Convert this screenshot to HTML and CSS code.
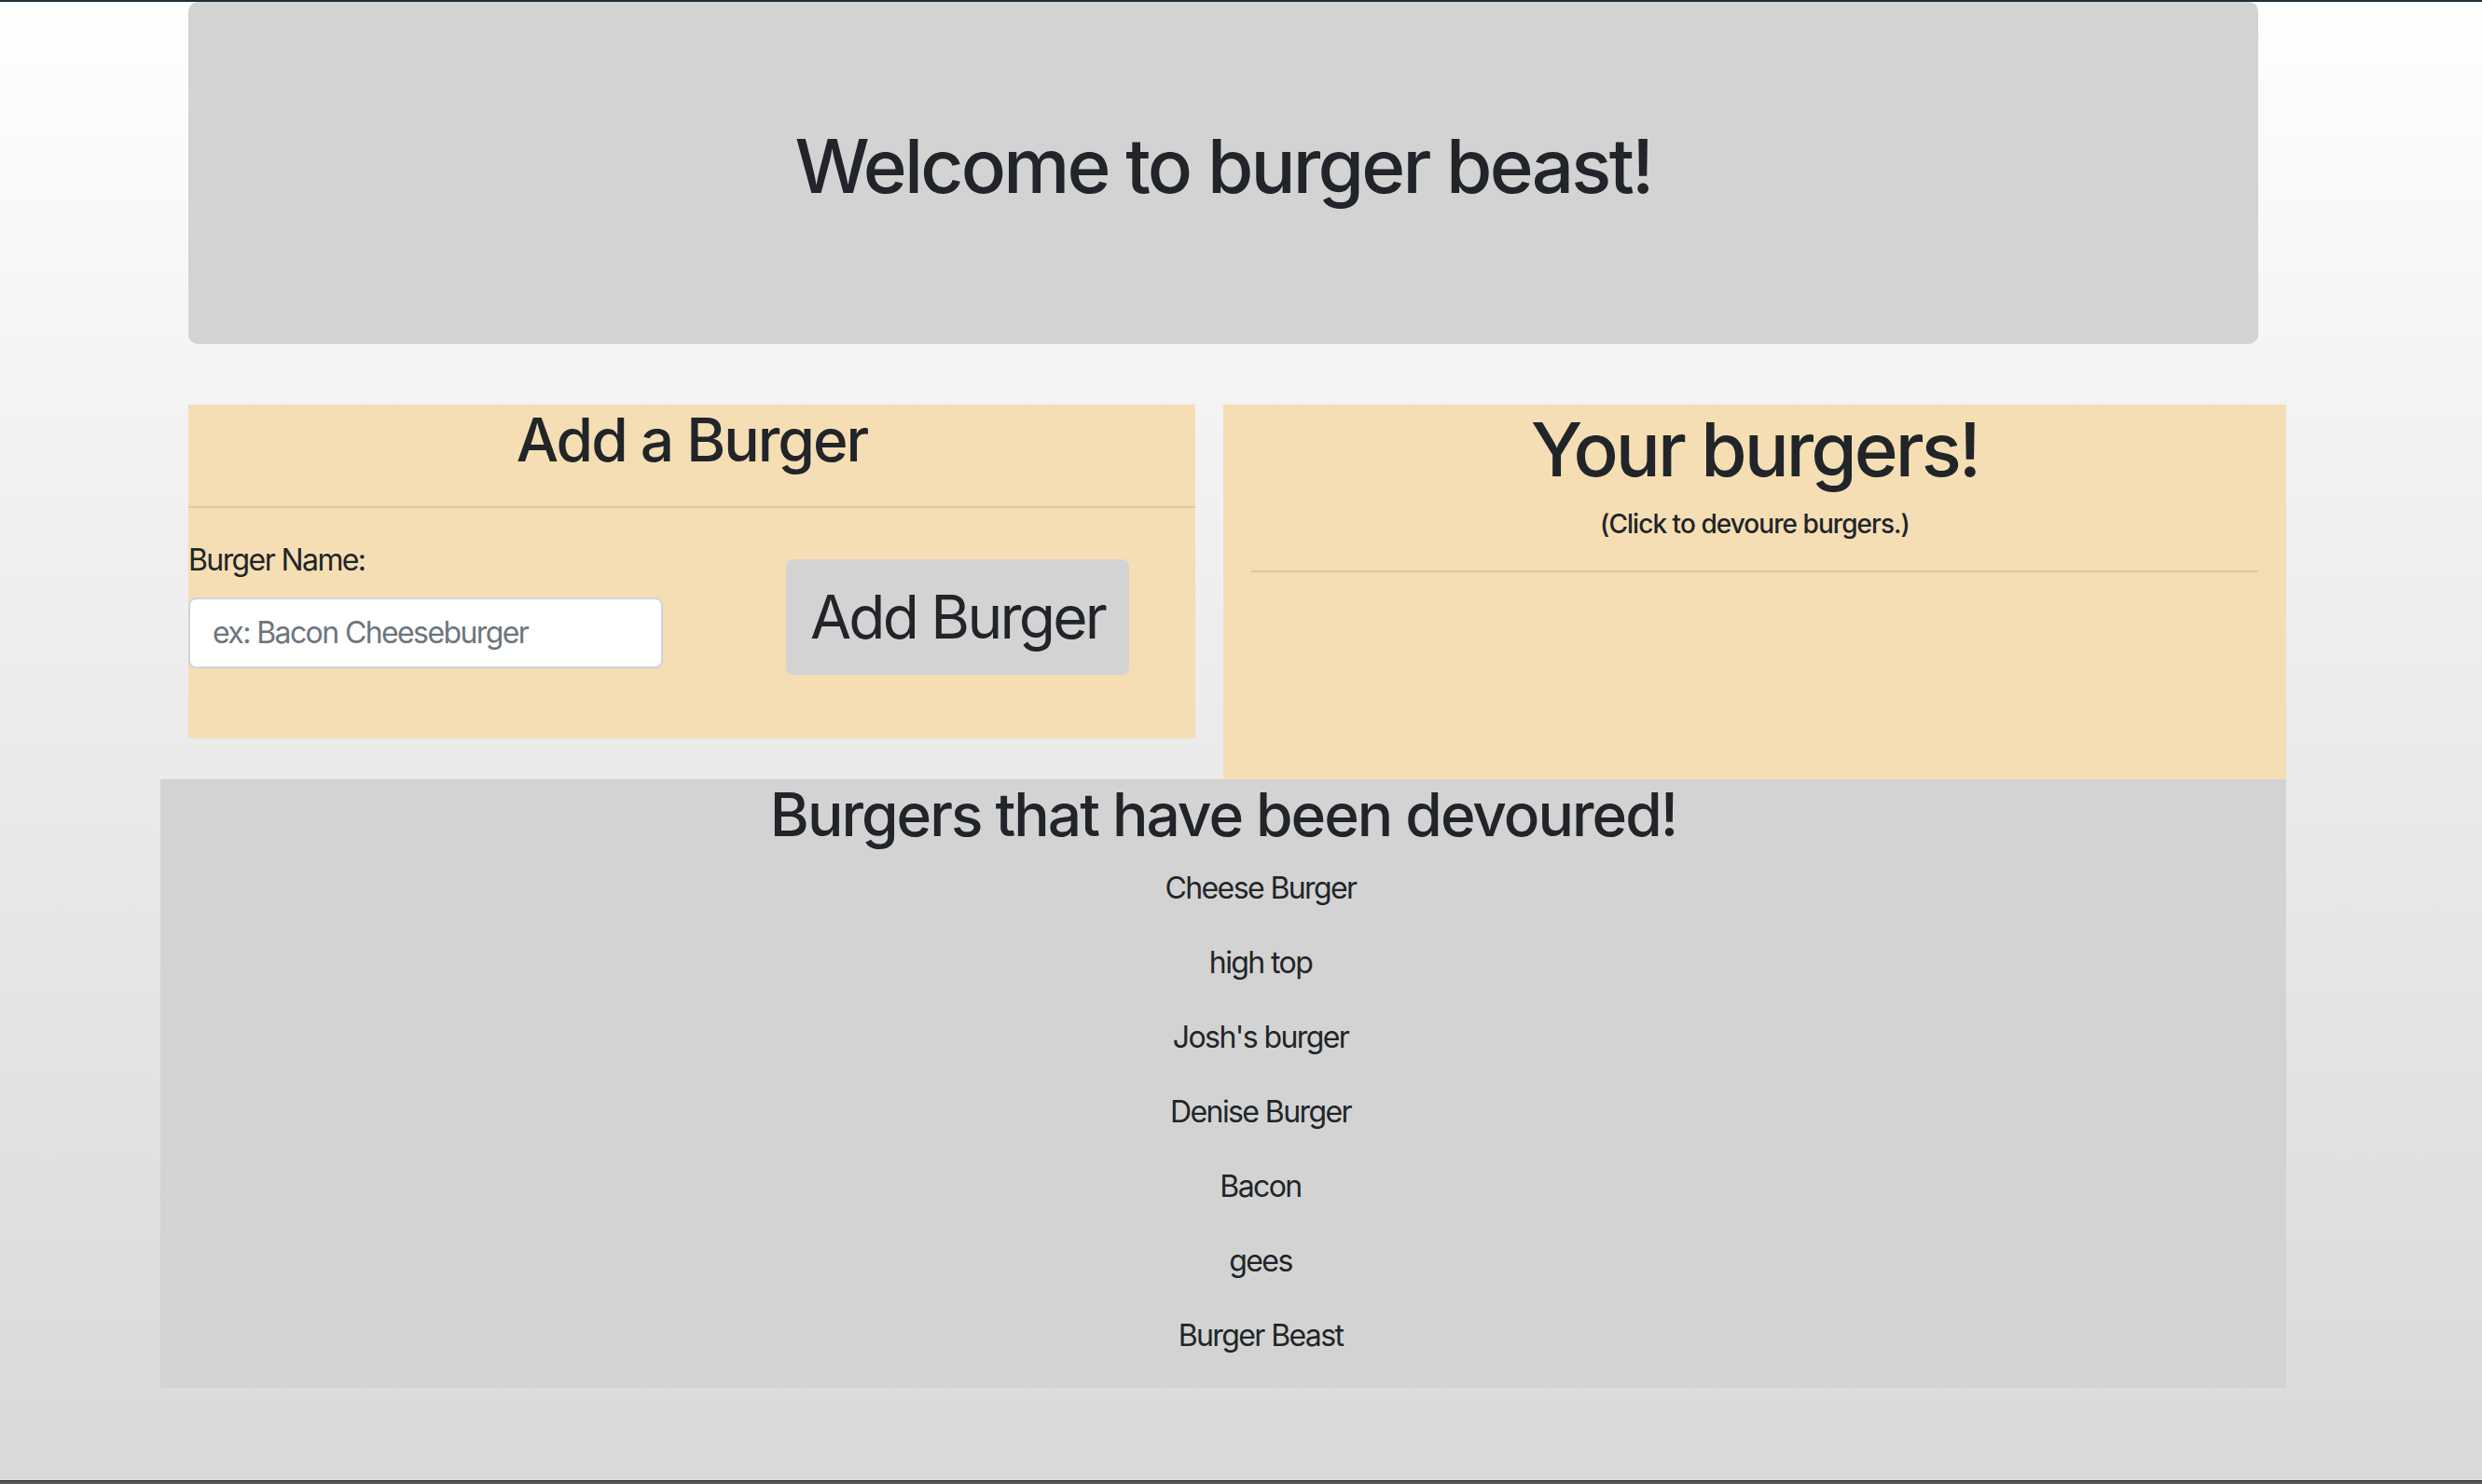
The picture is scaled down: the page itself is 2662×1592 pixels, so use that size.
FILE: index.html
```html
<!DOCTYPE html>
<html lang="en">
<head>
<meta charset="utf-8">
<title>Burger Beast</title>
<link rel="stylesheet" href="styles.css">
</head>
<body>
<div class="topbar"></div>
<div class="container">
  <div class="jumbotron">
    <h1 class="display">Welcome to burger beast!</h1>
  </div>
  <div class="row">
    <div class="col">
      <div class="add-card">
        <h2 class="h2">Add a Burger</h2>
        <hr class="rule">
        <form class="add-form">
          <div class="form-group">
            <label class="label" for="burger">Burger Name:</label>
            <input class="form-control" id="burger" type="text" placeholder="ex: Bacon Cheeseburger">
          </div>
          <button class="btn" type="button">Add Burger</button>
        </form>
      </div>
    </div>
    <div class="col col-yours">
      <h1 class="h1">Your burgers!</h1>
      <h6 class="h6">(Click to devoure burgers.)</h6>
      <hr class="rule">
    </div>
  </div>
  <div class="devoured">
    <h2 class="h2">Burgers that have been devoured!</h2>
    <ul class="eaten">
      <li>Cheese Burger</li>
      <li>high top</li>
      <li>Josh's burger</li>
      <li>Denise Burger</li>
      <li>Bacon</li>
      <li>gees</li>
      <li>Burger Beast</li>
    </ul>
  </div>
</div>
<div class="bottombar"></div>
</body>
</html>
```
FILE: styles.css
```css
html, body {
  margin: 0;
  padding: 0;
}
body {
  height: 1592px;
  overflow: hidden;
  position: relative;
  font-family: Inter, "Noto Sans", "Liberation Sans", sans-serif;
  font-size: 32px;
  line-height: 1.5;
  color: #212529;
  background: linear-gradient(to bottom, #ffffff 0%, #f4f4f4 25%, #ebebeb 50%, #d9d9d9 100%);
}
.topbar {
  height: 2px;
  background: #1e2f38;
}
.container {
  width: 2220px;
  margin-left: 202px;
}
.jumbotron {
  background: #d3d3d3;
  border-radius: 10px;
  padding: 128px 64px;
  height: 367px;
  box-sizing: border-box;
  margin-bottom: 65px;
  text-align: center;
}
.display {
  margin: 0;
  font-size: 80px;
  font-weight: 500;
  line-height: 1.2;
  letter-spacing: -2.8px;
}
.row {
  display: flex;
  align-items: flex-start;
  margin: 0 -30px;
}
.col {
  width: 1140px;
  box-sizing: border-box;
  padding: 0 30px;
}
.add-card {
  background: #f5deb3;
  padding-bottom: 68px;
}
.h2 {
  margin: 0 0 16px;
  font-size: 64px;
  font-weight: 500;
  line-height: 1.2;
  text-align: center;
  letter-spacing: -2px;
}
.h1 {
  margin: 0 0 16px;
  font-size: 80px;
  font-weight: 500;
  line-height: 1.2;
  text-align: center;
  letter-spacing: -3px;
}
.h6 {
  margin: 0 0 16px;
  font-size: 28px;
  font-weight: 500;
  line-height: 1.2;
  text-align: center;
  letter-spacing: -0.95px;
}
.rule {
  margin: 32px 0;
  border: 0;
  border-top: 2px solid rgba(0, 0, 0, 0.1);
}
.add-form {
  display: flex;
  align-items: flex-start;
}
.form-group {
  width: 509px;
}
.label {
  display: block;
  margin-bottom: 16px;
  font-size: 32px;
  line-height: 48px;
  letter-spacing: -1.6px;
}
.form-control {
  display: block;
  width: 100%;
  height: 76px;
  box-sizing: border-box;
  padding: 12px 24px;
  font-family: inherit;
  font-size: 32px;
  color: #495057;
  background: #fff;
  border: 2px solid #ced4da;
  border-radius: 8px;
  letter-spacing: -1.6px;
}
.form-control::placeholder {
  color: #6c757d;
}
.btn {
  margin: 23px 0 0 132px;
  padding: 12px 24px;
  font-family: inherit;
  font-size: 64px;
  line-height: 1.5;
  font-weight: 400;
  color: #212529;
  background: #d3d3d3;
  border: 2px solid transparent;
  border-radius: 8px;
  letter-spacing: -2.8px;
}
.col-yours {
  background: #f5deb3;
  min-height: 402px;
}
.devoured {
  margin: 0 -30px;
  padding: 0 30px;
  background: #d3d3d3;
  display: flow-root;
}
.eaten {
  list-style: none;
  margin: 0;
  padding: 0 0 0 80px;
  text-align: center;
}
.eaten li {
  margin-bottom: 32px;
  line-height: 48px;
  letter-spacing: -1.6px;
}
.bottombar {
  position: absolute;
  left: 0;
  right: 0;
  bottom: 0;
  height: 3px;
  border-top: 1px solid #222;
  background: #5a5a5a;
}
```
